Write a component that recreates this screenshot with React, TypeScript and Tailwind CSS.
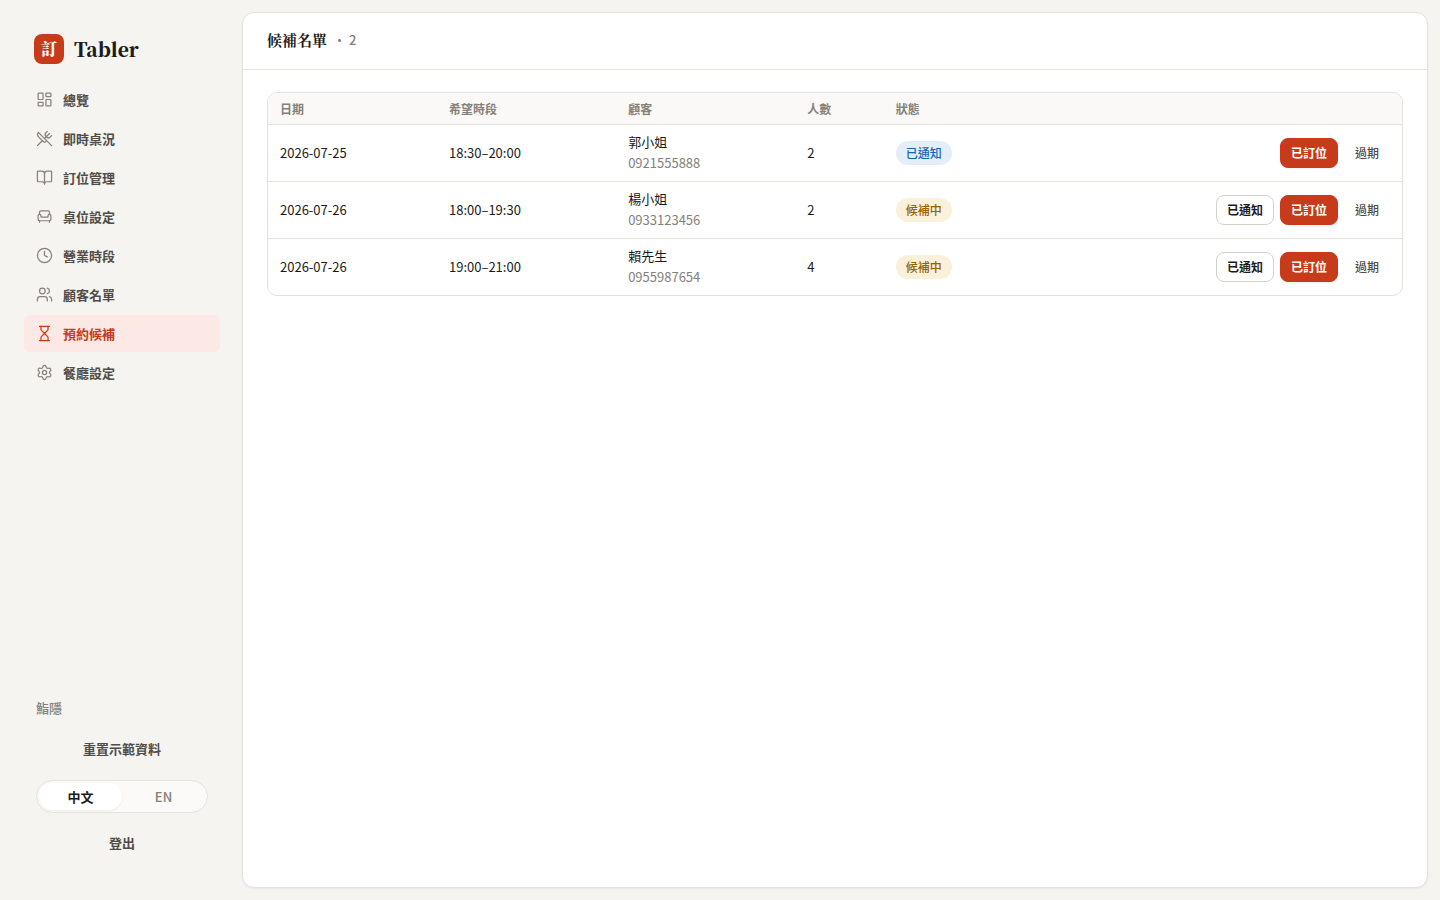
import { useState } from "react";
import {
  Armchair,
  BookOpen,
  Clock,
  Hourglass,
  LayoutDashboard,
  Settings,
  Users,
  UtensilsCrossed,
  type LucideIcon,
} from "lucide-react";

const navItems: { label: string; icon: LucideIcon }[] = [
  { label: "總覽", icon: LayoutDashboard },
  { label: "即時桌況", icon: UtensilsCrossed },
  { label: "訂位管理", icon: BookOpen },
  { label: "桌位設定", icon: Armchair },
  { label: "營業時段", icon: Clock },
  { label: "顧客名單", icon: Users },
  { label: "預約候補", icon: Hourglass },
  { label: "餐廳設定", icon: Settings },
];

type Status = "notified" | "waiting";

interface Entry {
  date: string;
  slot: string;
  name: string;
  phone: string;
  party: number;
  status: Status;
}

const entries: Entry[] = [
  { date: "2026-07-25", slot: "18:30–20:00", name: "郭小姐", phone: "0921555888", party: 2, status: "notified" },
  { date: "2026-07-26", slot: "18:00–19:30", name: "楊小姐", phone: "0933123456", party: 2, status: "waiting" },
  { date: "2026-07-26", slot: "19:00–21:00", name: "賴先生", phone: "0955987654", party: 4, status: "waiting" },
];

function StatusBadge({ status }: { status: Status }) {
  return status === "notified" ? (
    <span className="inline-flex h-6 items-center rounded-full bg-[#e4eef8] px-2.5 text-xs font-medium text-[#1268b8]">
      已通知
    </span>
  ) : (
    <span className="inline-flex h-6 items-center rounded-full bg-[#fbf0d9] px-2.5 text-xs font-medium text-[#966200]">
      候補中
    </span>
  );
}

function Sidebar() {
  const [lang, setLang] = useState<"zh" | "en">("zh");
  const on = "flex-1 rounded-full bg-white text-[13px] font-semibold text-[#1c1b19] shadow-xs";
  const off = "flex-1 rounded-full text-[13px] font-medium text-[#85817a]";
  return (
    <aside className="flex w-[242px] shrink-0 flex-col px-6 pt-[31px] pb-[39px]">
      <div className="flex h-9 items-center gap-2.5 px-2.5">
        <span className="flex size-[30px] items-center justify-center rounded-lg bg-[#c73b1b] font-['Noto_Serif_CJK_TC',serif] text-base font-black text-white">
          訂
        </span>
        <span className="font-['Noto_Serif_CJK_TC',serif] text-[19px] font-black text-[#1c1b19]">Tabler</span>
      </div>
      <nav className="mt-3.5 flex flex-col gap-0.5">
        {navItems.map(({ label, icon: Icon }) => {
          const active = label === "預約候補";
          return (
            <a
              key={label}
              href="#"
              aria-current={active ? "page" : undefined}
              className={
                active
                  ? "flex h-[37px] w-[196px] items-center gap-2.5 rounded-md bg-[#fce8e4] px-3 text-[13px] font-semibold text-[#c73b1b]"
                  : "flex h-[37px] w-[196px] items-center gap-2.5 rounded-md px-3 text-[13px] font-semibold text-[#504d48]"
              }
            >
              <Icon size={17} strokeWidth={1.75} className={active ? "text-[#c73b1b]" : "text-[#85817a]"} />
              {label}
            </a>
          );
        })}
      </nav>
      <div className="mt-auto flex w-[196px] flex-col gap-3 px-3">
        <p className="text-[13px] leading-5 font-medium text-[#85817a]">鮨隱</p>
        <button type="button" className="h-[38px] text-[13px] font-semibold text-[#504d48]">
          重置示範資料
        </button>
        <div className="flex h-[33px] rounded-full border border-[#e4e2dd] bg-[#fbfaf8] p-0.5" role="group" aria-label="語言">
          <button type="button" aria-pressed={lang === "zh"} onClick={() => setLang("zh")} className={lang === "zh" ? on : off}>
            中文
          </button>
          <button type="button" aria-pressed={lang === "en"} onClick={() => setLang("en")} className={lang === "en" ? on : off}>
            EN
          </button>
        </div>
        <button type="button" className="h-9 text-[13px] font-semibold text-[#504d48]">
          登出
        </button>
      </div>
    </aside>
  );
}

function WaitlistTable() {
  return (
    <div className="overflow-hidden rounded-[10px] border border-[#e4e2dd]">
      <table className="w-full table-fixed text-left text-[13px] text-[#1c1b19]">
        <colgroup>
          <col className="w-[14.9%]" />
          <col className="w-[15.8%]" />
          <col className="w-[15.8%]" />
          <col className="w-[7.8%]" />
          <col className="w-[15.8%]" />
          <col />
        </colgroup>
        <thead>
          <tr className="h-[31px] border-b border-[#e4e2dd] bg-[#fbf9f7] text-xs text-[#85817a]">
            <th scope="col" className="px-3 pt-0.5 font-semibold">日期</th>
            <th scope="col" className="px-3 pt-0.5 font-semibold">希望時段</th>
            <th scope="col" className="px-3 pt-0.5 font-semibold">顧客</th>
            <th scope="col" className="px-3 pt-0.5 font-semibold">人數</th>
            <th scope="col" className="px-3 pt-0.5 font-semibold">狀態</th>
            <th scope="col" aria-label="操作" />
          </tr>
        </thead>
        <tbody>
          {entries.map((entry) => (
            <tr key={entry.phone} className="border-b border-[#e4e2dd] last:border-b-0">
              <td className="px-3">{entry.date}</td>
              <td className="px-3">{entry.slot}</td>
              <td className="px-3 pt-1.5 pb-2 leading-[21px]">
                <div>{entry.name}</div>
                <div className="text-[#85817a]">{entry.phone}</div>
              </td>
              <td className="px-3">{entry.party}</td>
              <td className="px-3">
                <div className="flex">
                  <StatusBadge status={entry.status} />
                </div>
              </td>
              <td className="px-3">
                <div className="flex justify-end gap-1.5 text-xs">
                  {entry.status === "waiting" && (
                    <button type="button" className="h-[30px] rounded-lg border border-[#d5d2cc] bg-white px-2.5 font-semibold">
                      已通知
                    </button>
                  )}
                  <button
                    type="button"
                    className="h-[30px] rounded-lg border border-[#c73b1b] bg-[#c73b1b] px-2.5 font-semibold text-white shadow-xs"
                  >
                    已訂位
                  </button>
                  <button type="button" className="h-[30px] rounded-lg border border-transparent px-2.5 font-medium text-[#504d48]">
                    過期
                  </button>
                </div>
              </td>
            </tr>
          ))}
        </tbody>
      </table>
    </div>
  );
}

export default function App() {
  const waiting = entries.filter((entry) => entry.status === "waiting").length;
  return (
    <div className="flex min-h-screen bg-[#f5f4f0] font-['Noto_Sans_CJK_TC',sans-serif]" lang="zh-Hant">
      <Sidebar />
      <main className="my-3 mr-3 min-w-0 flex-1 rounded-xl border border-[#e4e2dd] bg-white shadow-xs">
        <header className="flex h-[57px] items-start gap-1.5 border-b border-[#e4e2dd] px-6 pt-[15px]">
          <h1 className="font-['Noto_Serif_CJK_TC',serif] text-[15px] leading-6 font-bold text-[#1c1b19]">候補名單</h1>
          <span className="text-[13px] leading-6 font-medium text-[#85817a]">· {waiting}</span>
        </header>
        <div className="px-6 pt-[22px] pb-6">
          <WaitlistTable />
        </div>
      </main>
    </div>
  );
}
